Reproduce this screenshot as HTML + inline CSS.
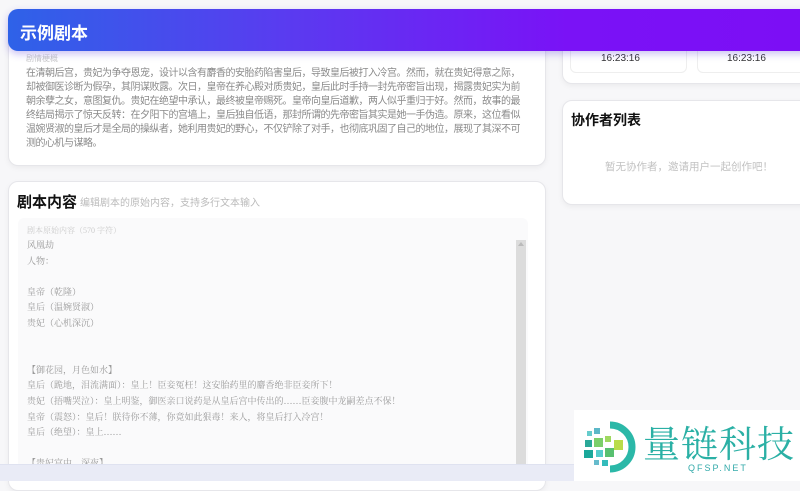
<!DOCTYPE html>
<html><head><meta charset="utf-8"><style>
*{margin:0;padding:0;box-sizing:border-box}
body{width:800px;height:481px;overflow:hidden;background:#f7f7f9;font-family:"Liberation Sans","Noto Sans CJK SC",sans-serif;position:relative}
.card{position:absolute;background:#fff;border:1px solid #e6e6ea;border-radius:10px;box-shadow:0 2px 6px rgba(0,0,0,.05)}
.hdr{position:absolute;left:8px;top:9px;width:800px;height:42px;border-radius:10px 0 0 10px;background:linear-gradient(90deg,#2e62e8 0%,#5a3bf0 35%,#7a12f6 70%,#7c0ef5 100%);box-shadow:0 3px 8px rgba(80,50,220,.3)}
.hdr span{position:absolute;left:12px;top:10px;color:#fff;font-size:17px;font-weight:bold}
.sum{position:absolute;left:26px;top:67px;font-size:10px;line-height:13.9px;color:#8a8a8a;white-space:nowrap;letter-spacing:-0.5px}
.ta{position:absolute;left:18px;top:218px;width:510px;height:262px;background:#fafafb;border-radius:6px}
.lines{position:absolute;left:27px;top:238px;font-family:"Liberation Serif","Noto Serif CJK SC",serif;font-size:9px;line-height:15.6px;color:#9a9a9a;white-space:pre}
</style></head><body>
<div class="card" style="left:8px;top:20px;width:538px;height:146px"></div>
<div style="position:absolute;left:26px;top:53px;font-size:8px;color:#c8c8c8">剧情梗概</div>
<div class="sum">在清朝后宫，贵妃为争夺恩宠，设计以含有麝香的安胎药陷害皇后，导致皇后被打入冷宫。然而，就在贵妃得意之际，<br>却被御医诊断为假孕，其阴谋败露。次日，皇帝在养心殿对质贵妃，皇后此时手持一封先帝密旨出现，揭露贵妃实为前<br>朝余孽之女，意图复仇。贵妃在绝望中承认，最终被皇帝赐死。皇帝向皇后道歉，两人似乎重归于好。然而，故事的最<br>终结局揭示了惊天反转：在夕阳下的宫墙上，皇后独自低语，那封所谓的先帝密旨其实是她一手伪造。原来，这位看似<br>温婉贤淑的皇后才是全局的操纵者，她利用贵妃的野心，不仅铲除了对手，也彻底巩固了自己的地位，展现了其深不可<br>测的心机与谋略。</div>

<div class="card" style="left:8px;top:181px;width:538px;height:310px"></div>
<div style="position:absolute;left:17px;top:191px;font-size:15px;font-weight:bold;color:#111">剧本内容</div>
<div style="position:absolute;left:80px;top:194px;font-size:10px;color:#bbb">编辑剧本的原始内容，支持多行文本输入</div>
<div class="ta"></div>
<div style="position:absolute;left:27px;top:225px;font-family:'Liberation Serif','Noto Serif CJK SC',serif;font-size:8px;color:#ccc">剧本原始内容（570 字符）</div>
<div class="lines">风凰劫
人物：

皇帝（乾隆）
皇后（温婉贤淑）
贵妃（心机深沉）


【御花园，月色如水】
皇后（跪地，泪流满面）：皇上！臣妾冤枉！这安胎药里的麝香绝非臣妾所下！
贵妃（捂嘴哭泣）：皇上明鉴，御医亲口说药是从皇后宫中传出的……臣妾腹中龙嗣差点不保！
皇帝（震怒）：皇后！朕待你不薄，你竟如此狠毒！来人，将皇后打入冷宫！
皇后（绝望）：皇上……

【贵妃宫中，深夜】</div>
<div style="position:absolute;left:516px;top:240px;width:10px;height:230px;background:#dcdcdc"></div>
<div style="position:absolute;left:518px;top:242px;width:0;height:0;border-left:3px solid transparent;border-right:3px solid transparent;border-bottom:4px solid #bbb"></div>

<div class="card" style="left:562px;top:20px;width:250px;height:64px"></div>
<div style="position:absolute;left:570px;top:40px;width:117px;height:33px;border:1px solid #eee;border-radius:6px"></div>
<div style="position:absolute;left:697px;top:40px;width:110px;height:33px;border:1px solid #eee;border-radius:6px"></div>
<div style="position:absolute;left:601px;top:53px;font-size:10px;color:#333">16:23:16</div>
<div style="position:absolute;left:727px;top:53px;font-size:10px;color:#333">16:23:16</div>

<div class="card" style="left:562px;top:100px;width:250px;height:105px"></div>
<div style="position:absolute;left:571px;top:110px;font-size:14px;font-weight:bold;color:#111">协作者列表</div>
<div style="position:absolute;left:605px;top:159px;font-size:10.5px;color:#c2c2c2">暂无协作者，邀请用户一起创作吧！</div>

<div class="hdr"><span>示例剧本</span></div>

<div style="position:absolute;left:0;top:464px;width:580px;height:17px;background:#e9ebf6;border-top:1px solid #dfe2f0"></div>
<div style="position:absolute;left:574px;top:410px;width:226px;height:71px;background:#fff"></div>
<svg style="position:absolute;left:580px;top:418px" width="60" height="60" viewBox="0 0 60 60">
<path d="M30 7 A22 22 0 0 1 30 51" fill="none" stroke="#2bb8a8" stroke-width="7"/>
<rect x="7" y="13" width="5" height="5" fill="#6cc"/><rect x="14" y="10" width="6" height="6" fill="#5cb8c8"/>
<rect x="5" y="22" width="7" height="7" fill="#2aa898"/><rect x="14" y="20" width="9" height="9" fill="#7ccf6a"/>
<rect x="25" y="18" width="6" height="6" fill="#a0d860"/><rect x="34" y="22" width="9" height="10" fill="#b9dc4a"/>
<rect x="4" y="32" width="9" height="8" fill="#1aa89a"/><rect x="16" y="32" width="7" height="7" fill="#5cc"/>
<rect x="25" y="30" width="9" height="9" fill="#58c070"/><rect x="14" y="42" width="5" height="5" fill="#6bc"/>
<rect x="22" y="42" width="6" height="6" fill="#3bb"/>
</svg>
<div style="position:absolute;left:643px;top:421px;font-family:'Noto Serif CJK SC',serif;font-size:37px;line-height:40px;color:#2bb0a5;letter-spacing:1px">量链科技</div>
<div style="position:absolute;left:688px;top:463px;font-size:9px;letter-spacing:2px;color:#3aa">QFSP.NET</div>
</body></html>
